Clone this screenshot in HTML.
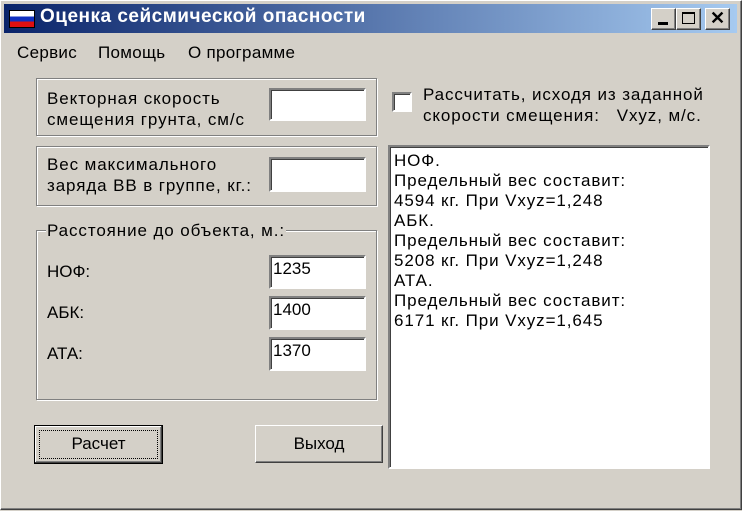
<!DOCTYPE html>
<html><head><meta charset="utf-8"><style>
*{margin:0;padding:0;box-sizing:border-box}
body{width:742px;height:511px;background:#d4d0c8;font-family:"Liberation Sans",sans-serif;font-size:16px;color:#000;position:relative;overflow:hidden}
.a{position:absolute}
.w{font-size:17px;letter-spacing:0.9px}
.win{left:0;top:0;width:742px;height:510px;border:1px solid #fff;border-right-color:#404040;border-bottom-color:#404040;box-shadow:inset -1px -1px #808080,inset 1px 1px #d4d0c8}
.title{left:4px;top:4px;width:733px;height:29px;background:linear-gradient(90deg,#0a246a,#a6caf0)}
.tt{left:40px;top:6px;color:#fff;font-weight:bold;font-size:19px;letter-spacing:0.5px}
.tb{top:8px;width:25px;height:22px;background:#d4d0c8;border:1px solid #fff;border-right-color:#404040;border-bottom-color:#404040;box-shadow:inset -1px -1px #808080}
.grp{border:1px solid #808080;box-shadow:1px 1px #fff,inset 1px 1px #fff}
.edit{background:#fff;border:2px solid #808080;border-right-color:#fff;border-bottom-color:#fff;box-shadow:inset 1px 1px #404040;font-size:17px;padding:2px 0 0 2px}
.btn{background:#d4d0c8;border:1px solid #fff;border-right-color:#404040;border-bottom-color:#404040;box-shadow:inset -1px -1px #808080;text-align:center;font-size:17px;line-height:36px}
</style></head><body>
<div class="a win"></div>
<div class="a title"></div>
<div class="a" style="left:9px;top:10px;width:26px;height:18px;background:linear-gradient(#fff 0 33%,#1030c0 33% 66%,#e01010 66%);border:1px solid #000"></div>
<div class="a tt">Оценка сейсмической опасности</div>
<div class="a tb" style="left:651px"><div class="a" style="left:6px;top:13px;width:10px;height:3px;background:#000"></div></div>
<div class="a tb" style="left:676px"><div class="a" style="left:5px;top:3px;width:13px;height:12px;border:1px solid #000;border-top-width:2px"></div></div>
<div class="a tb" style="left:705px;font-weight:bold;font-size:18px;text-align:center;line-height:19px">✕</div>
<div class="a" style="left:17px;top:43px;font-size:17px;letter-spacing:0.3px">Сервис</div>
<div class="a" style="left:98px;top:43px;font-size:17px;letter-spacing:0.3px">Помощь</div>
<div class="a" style="left:188px;top:43px;font-size:17px;letter-spacing:0.3px">О программе</div>

<div class="a grp" style="left:36px;top:78px;width:341px;height:58px"></div>
<div class="a w" style="left:47px;top:88px;line-height:21px">Векторная скорость<br>смещения грунта, см/с</div>
<div class="a edit" style="left:269px;top:88px;width:97px;height:33px"></div>

<div class="a grp" style="left:36px;top:146px;width:341px;height:60px"></div>
<div class="a w" style="left:47px;top:154px;line-height:21px">Вес максимального<br>заряда ВВ в группе, кг.:</div>
<div class="a edit" style="left:269px;top:157px;width:97px;height:35px"></div>

<div class="a grp" style="left:36px;top:230px;width:341px;height:170px"></div>
<div class="a w" style="left:46px;top:221px;background:#d4d0c8;padding:0 1px">Расстояние до объекта, м.:</div>
<div class="a" style="left:47px;top:262px;font-size:17px">НОФ:</div>
<div class="a" style="left:47px;top:303px;font-size:17px">АБК:</div>
<div class="a" style="left:47px;top:344px;font-size:17px">АТА:</div>
<div class="a edit" style="left:269px;top:255px;width:97px;height:34px">1235</div>
<div class="a edit" style="left:269px;top:296px;width:97px;height:34px">1400</div>
<div class="a edit" style="left:269px;top:337px;width:97px;height:34px">1370</div>

<div class="a" style="left:392px;top:92px;width:20px;height:20px;background:#fff;border:2px solid #808080;border-right-color:#fff;border-bottom-color:#fff;box-shadow:inset 1px 1px #404040"></div>
<div class="a w" style="left:423px;top:84px;line-height:21px">Рассчитать, исходя из заданной<br>скорости смещения:&nbsp;&nbsp; Vxyz, м/с.</div>

<div class="a edit w" style="left:388px;top:145px;width:322px;height:324px;line-height:20px;padding:4px 0 0 4px">НОФ.<br>Предельный вес составит:<br>4594 кг. При Vxyz=1,248<br>АБК.<br>Предельный вес составит:<br>5208 кг. При Vxyz=1,248<br>АТА.<br>Предельный вес составит:<br>6171 кг. При Vxyz=1,645</div>

<div class="a btn" style="left:34px;top:425px;width:129px;height:39px;border:1px solid #000;box-shadow:inset -1px -1px #404040,inset 1px 1px #fff,inset -2px -2px #808080"><div class="a" style="left:4px;top:4px;right:4px;bottom:4px;border:1px dotted #000"></div>Расчет</div>
<div class="a btn" style="left:255px;top:425px;width:128px;height:38px">Выход</div>
</body></html>
